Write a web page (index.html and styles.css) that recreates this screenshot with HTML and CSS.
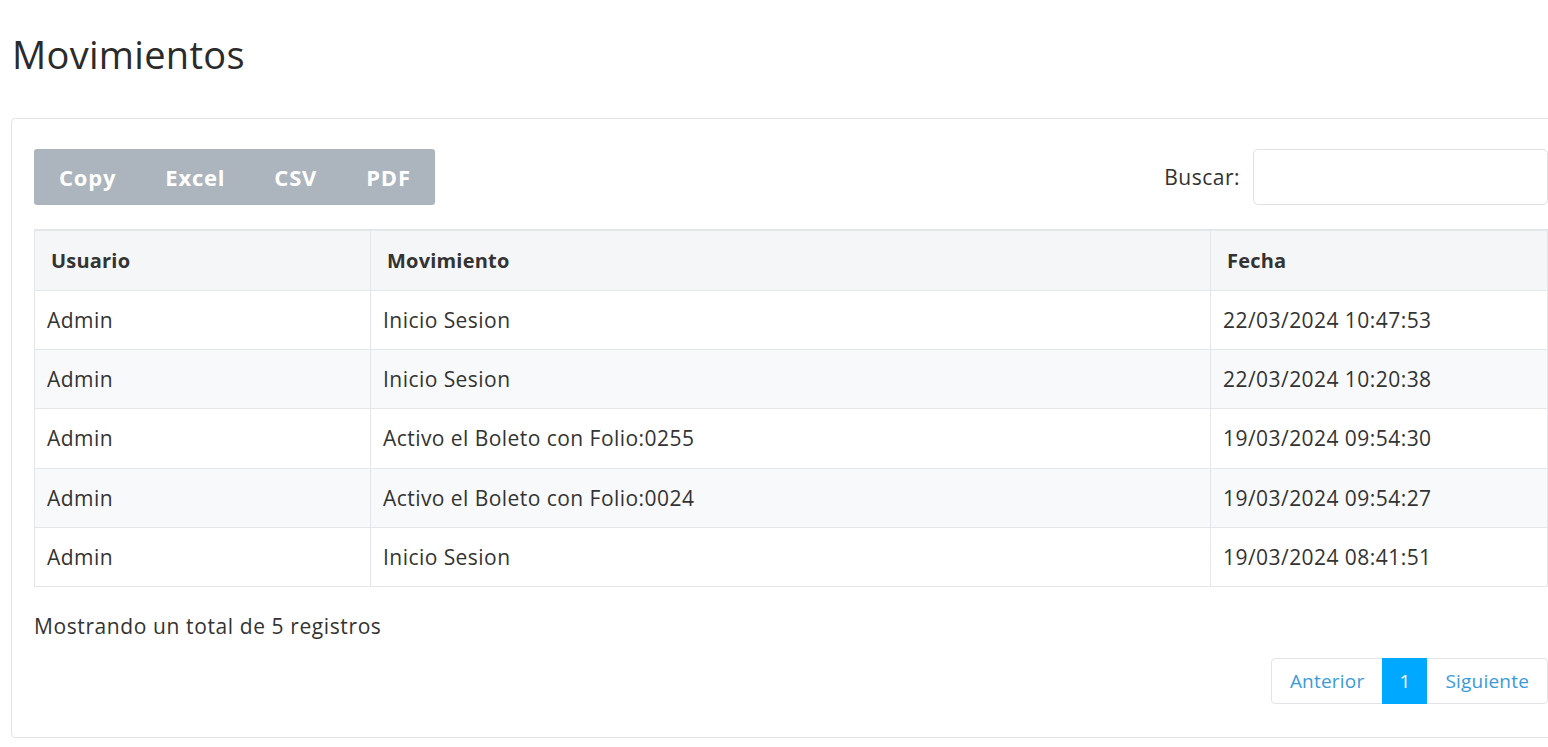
FILE: index.html
```html
<!DOCTYPE html>
<html lang="es">
<head>
<meta charset="utf-8">
<title>Movimientos</title>
<link rel="stylesheet" href="styles.css">
</head>
<body>
<h1 class="title">Movimientos</h1>
<div class="card">
  <div class="toolbar">
    <div class="btn-group">
      <button class="btn">Copy</button>
      <button class="btn">Excel</button>
      <button class="btn">CSV</button>
      <button class="btn">PDF</button>
    </div>
    <label class="search">Buscar: <input type="text" class="search-input"></label>
  </div>
  <table class="grid">
    <thead>
      <tr><th class="c1">Usuario</th><th class="c2">Movimiento</th><th class="c3">Fecha</th></tr>
    </thead>
    <tbody>
      <tr><td>Admin</td><td>Inicio Sesion</td><td>22/03/2024 10:47:53</td></tr>
      <tr><td>Admin</td><td>Inicio Sesion</td><td>22/03/2024 10:20:38</td></tr>
      <tr><td>Admin</td><td>Activo el Boleto con Folio:0255</td><td>19/03/2024 09:54:30</td></tr>
      <tr><td>Admin</td><td>Activo el Boleto con Folio:0024</td><td>19/03/2024 09:54:27</td></tr>
      <tr><td>Admin</td><td>Inicio Sesion</td><td>19/03/2024 08:41:51</td></tr>
    </tbody>
  </table>
  <div class="info">Mostrando un total de 5 registros</div>
  <div class="pager-row">
    <div class="pager">
      <span class="page">Anterior</span>
      <span class="page active">1</span>
      <span class="page">Siguiente</span>
    </div>
  </div>
</div>
</body>
</html>
```
FILE: styles.css
```css
html, body {
  margin: 0;
  padding: 0;
  background: #ffffff;
  overflow: hidden;
}
body {
  font-family: "Open Sans", "Lato", sans-serif;
  color: #333333;
  padding: 0 0 0 11px;
  width: 1600px;
}
.title {
  margin: 0;
  padding: 31px 0 0 1px;
  height: 118px;
  box-sizing: border-box;
  font-size: 38px;
  letter-spacing: 0.3px;
  font-weight: 400;
  line-height: 46px;
  color: #2b2b2b;
}
.card {
  border: 1px solid #e3e4e6;
  border-radius: 4px;
  width: 1580px;
  height: 620px;
  box-sizing: border-box;
  padding: 30px 0 0 22px;
}
.toolbar {
  display: flex;
  justify-content: space-between;
  align-items: center;
  width: 1514px;
  height: 56px;
}
.btn-group {
  display: flex;
  background: #acb5bd;
  border-radius: 3px;
  height: 56px;
}
.btn {
  border: none;
  background: transparent;
  color: #ffffff;
  font-family: inherit;
  font-size: 22px;
  letter-spacing: 0.8px;
  font-weight: 700;
  padding: 0 24px 0 25px;
  height: 56px;
}
.search {
  display: flex;
  align-items: center;
  gap: 13px;
  font-size: 21px;
  letter-spacing: 0.5px;
  color: #333;
}
.search-input {
  width: 295px;
  height: 56px;
  box-sizing: border-box;
  border: 1px solid #dfe1e4;
  border-radius: 5px;
}
.grid {
  margin-top: 24px;
  border-collapse: collapse;
  width: 1514px;
  font-size: 21px;
  letter-spacing: 0.45px;
}
.grid th, .grid td {
  border: 1px solid #e4e6e9;
  text-align: left;
}
.grid th {
  background: #f5f6f8;
  font-weight: 700;
  font-size: 20px;
  letter-spacing: 0.2px;
  height: 60px;
  box-sizing: border-box;
  padding: 0 16px;
  border-top: 2px solid #e4e6e9;
}
.grid td {
  height: 59.4px;
  box-sizing: border-box;
  padding: 0 12px;
  color: #333;
}
.grid tbody tr:nth-child(even) td {
  background: #f8f9fb;
}
.c1 { width: 336px; }
.c2 { width: 840px; }
.info {
  margin-top: 25px;
  font-size: 21px;
  line-height: 28px;
  letter-spacing: 0.6px;
  color: #333;
}
.pager-row {
  display: flex;
  justify-content: flex-end;
  width: 1514px;
  margin-top: 18px;
}
.pager {
  display: flex;
  border: 1px solid #e2e4e7;
  border-radius: 4px;
  height: 46px;
  box-sizing: border-box;
}
.page {
  display: flex;
  align-items: center;
  padding: 0 18px;
  font-size: 19px;
  letter-spacing: 0.2px;
  color: #3a9ad9;
}
.page.active {
  background: #00a8ff;
  color: #ffffff;
  padding: 0 17px;
  margin: -1px 0;
}
```
